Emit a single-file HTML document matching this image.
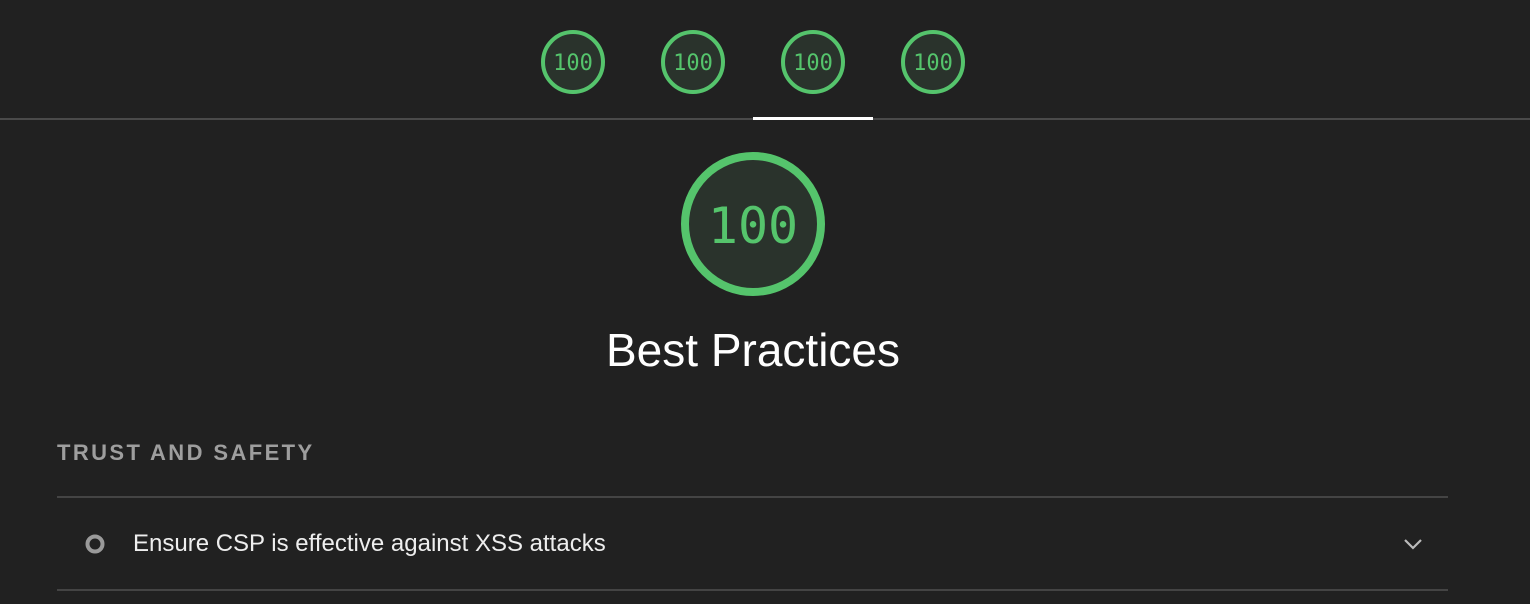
<!DOCTYPE html>
<html><head><style>
body{margin:0;width:1530px;height:604px;background:#212121;overflow:hidden;font-family:"Liberation Sans",sans-serif;position:relative}
svg{position:absolute;left:0;top:0}
.t{position:absolute;color:#fff}
</style></head><body>
<svg width="1530" height="604">
<g fill="#2a332c" stroke="#55c46c" stroke-width="4">
<circle cx="573" cy="62" r="30"/><circle cx="693" cy="62" r="30"/><circle cx="813" cy="62" r="30"/><circle cx="933" cy="62" r="30"/>
</g>
<g font-family="DejaVu Sans Mono, monospace" font-size="22" fill="#55c46c" text-anchor="middle">
<text x="573" y="70">100</text><text x="693" y="70">100</text><text x="813" y="70">100</text><text x="933" y="70">100</text>
</g>
<rect x="0" y="118" width="1530" height="2" fill="#4a4a4a"/>
<rect x="753" y="117" width="120" height="3" fill="#fff"/>
<circle cx="753" cy="224" r="68" fill="#2a332c" stroke="#55c46c" stroke-width="8"/>
<text x="753" y="243" font-family="DejaVu Sans Mono, monospace" font-size="50" fill="#55c46c" text-anchor="middle">100</text>
<rect x="57" y="496" width="1391" height="2" fill="#444"/>
<rect x="57" y="589" width="1391" height="2" fill="#444"/>
<circle cx="95" cy="544" r="7.5" fill="none" stroke="#9a9a9a" stroke-width="4"/>
<path d="M1405 540 l8 8 l8 -8" fill="none" stroke="#bbb" stroke-width="2.2"/>
</svg>
<div class="t" style="left:0;width:1506px;text-align:center;top:323px;font-size:46px">Best Practices</div>
<div class="t" style="left:57px;top:440px;font-size:22px;font-weight:bold;color:#9e9e9e;letter-spacing:2.4px">TRUST AND SAFETY</div>
<div class="t" style="left:133px;top:530px;font-size:24px;color:#eee">Ensure CSP is effective against XSS attacks</div>
</body></html>
